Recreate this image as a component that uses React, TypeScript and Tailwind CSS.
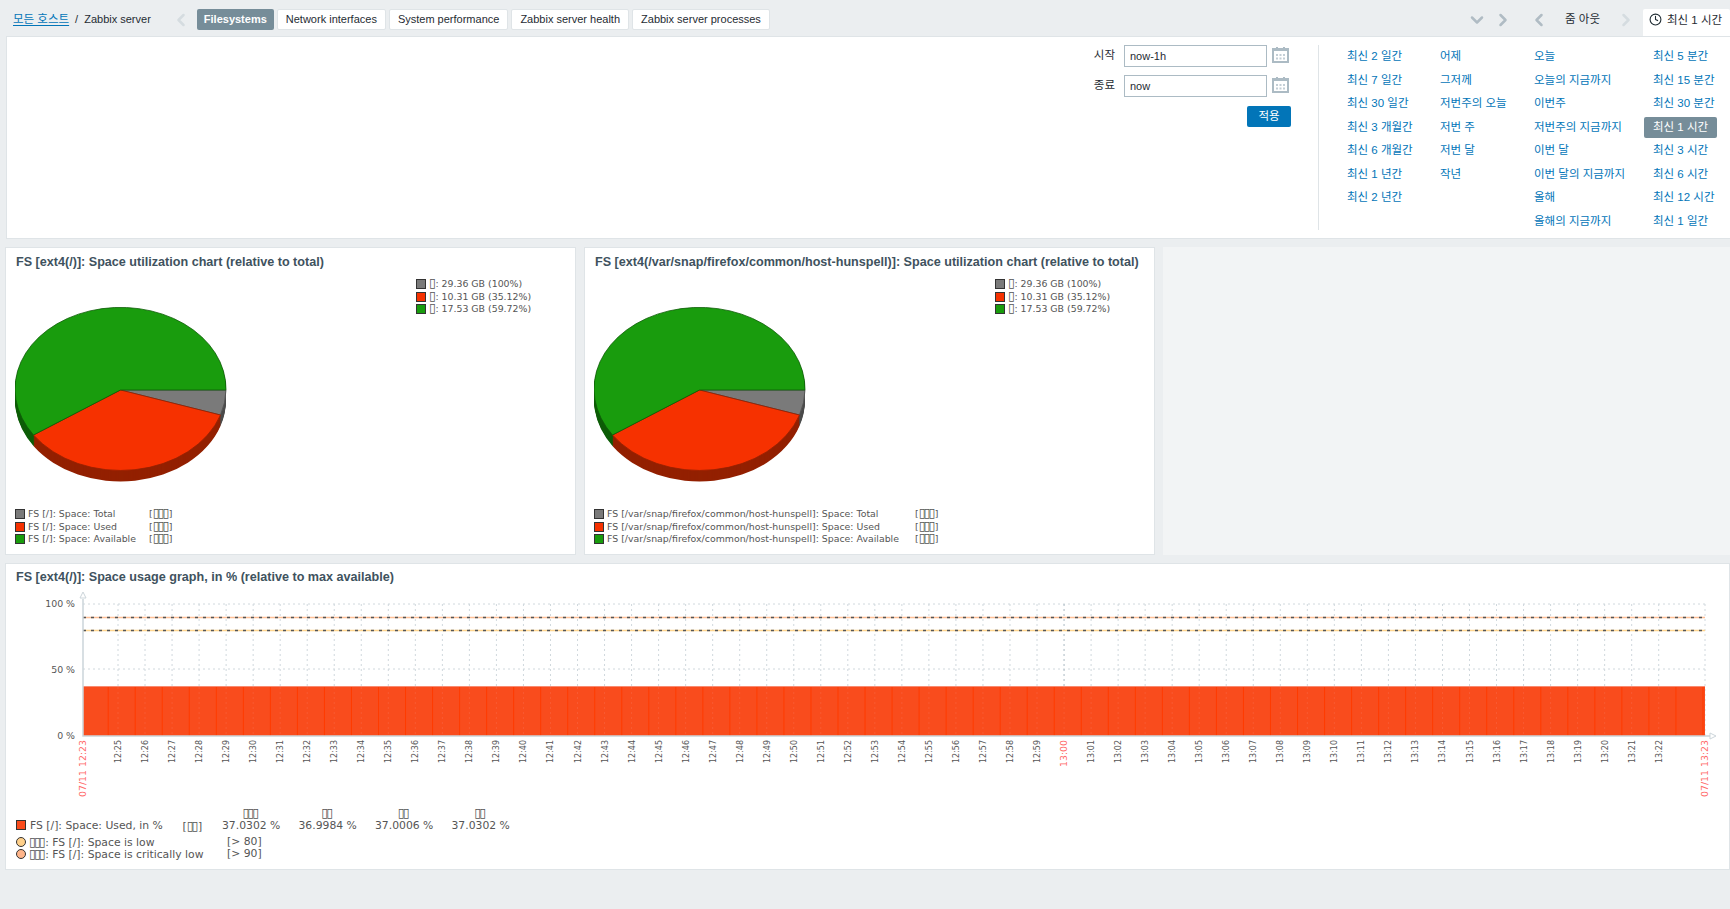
import React from 'react';
import { ChevronDown, ChevronLeft, ChevronRight, Clock } from 'lucide-react';

const TABS = ['Filesystems', 'Network interfaces', 'System performance', 'Zabbix server health', 'Zabbix server processes'];

const TIME_COLUMNS = [
  { width: 'w-[93px]', items: ['최신 2 일간', '최신 7 일간', '최신 30 일간', '최신 3 개월간', '최신 6 개월간', '최신 1 년간', '최신 2 년간'] },
  { width: 'w-[94px]', items: ['어제', '그저께', '저번주의 오늘', '저번 주', '저번 달', '작년'] },
  { width: 'w-[110px]', items: ['오늘', '오늘의 지금까지', '이번주', '저번주의 지금까지', '이번 달', '이번 달의 지금까지', '올해', '올해의 지금까지'] },
  { width: 'w-[90px]', items: ['최신 5 분간', '최신 15 분간', '최신 30 분간', '최신 1 시간', '최신 3 시간', '최신 6 시간', '최신 12 시간', '최신 1 일간'] },
];

const Calendar = () => (
  <svg width="17" height="17" viewBox="0 0 17 17" className="ml-[5px] -mt-[4px]">
    <path d="M1 3h15v13H1z" fill="#fff" stroke="#acbbc4" strokeWidth="2" />
    <path d="M1 3h15v2H1zM4 1h2v2H4zM11 1h2v2h-2z" fill="#acbbc4" />
    <path d="M4 8h2v2H4zM7.5 8h2v2h-2zM11 8h2v2h-2zM4 11.500h2v2H4zM7.500 11.500h2v2h-2zM11 11.500h2v2h-2z" fill="#c3ced5" />
  </svg>
);

// the reference shows missing-glyph boxes here, the chart font has no hangul
const Tofu = ({ text }: { text: string }) => (
  <span className="text-[12.500px] leading-none tracking-[-2px] pr-[1.500px]">{text}</span>
);

// Zabbix draws the pie as a flattened disc with a darker edge underneath
const Pie = () => {
  const gray = 'L105.5,0 A105.5,81.500 0 0 1 100,25';
  const red = 'L100,25 A105.5,81.500 0 0 1 -87,45';
  const green = 'L-87,45 A105.5,81.500 0 1 1 105.5,0';
  const depth = [11, 10, 9, 8, 7, 6, 5, 4, 3, 2, 1];
  return (
    <svg width="213" height="176" viewBox="0 0 213 176" className="shrink-0 mt-[31px]">
      <g transform="translate(105.5,83)">
        {depth.map(d => (
          <g key={d} transform={`translate(0,${d})`}>
            <path d={`M0,0 ${gray}Z`} fill="#4c4c4c" />
            <path d={`M0,0 ${red}Z`} fill="#932000" />
            <path d={`M0,0 ${green}Z`} fill="#0e5d08" />
          </g>
        ))}
        <path d={`M0,0 ${gray}Z`} fill="#7a7a7a" stroke="#4c4c4c" strokeWidth="0.8" />
        <path d={`M0,0 ${red}Z`} fill="#f63100" stroke="#932000" strokeWidth="0.8" />
        <path d={`M0,0 ${green}Z`} fill="#199c0d" stroke="#0e5d08" strokeWidth="0.8" />
      </g>
    </svg>
  );
};

const Swatch = ({ color }: { color: string }) => (
  <span className="w-[10px] h-[10px] shrink-0 border border-[#333]" style={{ backgroundColor: color }} />
);

interface PieWidgetProps {
  title: string;
  fsName: string;
  bracketX: string;
}

const PieWidget = ({ title, fsName, bracketX }: PieWidgetProps) => {
  const top = [
    { color: '#7a7a7a', text: '29.36 GB (100%)' },
    { color: '#f63100', text: '10.31 GB (35.12%)' },
    { color: '#199c0d', text: '17.53 GB (59.72%)' },
  ];
  const bottom = [
    { color: '#7a7a7a', text: 'Total' },
    { color: '#f63100', text: 'Used' },
    { color: '#199c0d', text: 'Available' },
  ];
  return (
    <div className="w-[571px] h-[308px] bg-white border border-[#dfe4e7] pl-[9px]">
      <h4 className="h-[28px] leading-[28px] pl-[1px] text-[12.600px] font-bold text-[#40525e] whitespace-nowrap">{title}</h4>
      <div className="flex items-start h-[207px]">
        <Pie />
        <div className="ml-[188px] mt-[2px] font-['DejaVu_Sans',sans-serif] text-[9.400px] text-[#555]">
          {top.map(row => (
            <div key={row.text} className="flex items-center h-[12.500px] gap-[3px]">
              <Swatch color={row.color} />
              <span className="whitespace-nowrap"><Tofu text="▯" />: {row.text}</span>
            </div>
          ))}
        </div>
      </div>
      <div className="mt-[25px] font-['DejaVu_Sans',sans-serif] text-[9.400px] text-[#555]">
        {bottom.map(row => (
          <div key={row.text} className="flex items-center h-[12.500px] gap-[3px]">
            <Swatch color={row.color} />
            <span className={`${bracketX} whitespace-nowrap`}>FS [{fsName}]: Space: {row.text}</span>
            <span className="whitespace-nowrap">[<Tofu text="▯▯▯" />]</span>
          </div>
        ))}
      </div>
    </div>
  );
};

const MINUTE_PX = 27.03;

const tickLabel = (i: number) => {
  const total = 12 * 60 + 25 + i;
  return `${Math.floor(total / 60)}:${String(total % 60).padStart(2, '0')}`;
};

const UsageChart = () => {
  const ticks = Array.from({ length: 58 }, (_, i) => i);
  const bars = Array.from({ length: 60 }, (_, i) => i);
  const font = { fontFamily: 'DejaVu Sans, sans-serif' };
  return (
    <svg width="1724" height="216" viewBox="0 0 1724 216" className="block" style={font}>
      {/* grid */}
      <g stroke="#d0d8dd" strokeWidth="1" strokeDasharray="2 3">
        <path d="M77 13H1699M77 78H1699M1699 13V145" fill="none" />
        {ticks.map(i => (
          <path key={i} d={`M${112 + i * MINUTE_PX} 13V145`} stroke={i === 35 ? '#a9b8c1' : '#d0d8dd'} />
        ))}
      </g>
      {/* thresholds */}
      <path d="M77 26.500H1699" stroke="#ffc097" strokeWidth="1.500" />
      <path d="M77 26.500H1699" stroke="#555" strokeWidth="1.500" strokeDasharray="3 5" />
      <path d="M77 39.500H1699" stroke="#ffd58f" strokeWidth="1.500" />
      <path d="M77 39.500H1699" stroke="#555" strokeWidth="1.500" strokeDasharray="3 5" />
      {/* data */}
      <rect x="77" y="95" width="1622" height="50" fill="#f94c1d" />
      <path d="M77 95.500H1699" stroke="#f98a70" />
      {bars.map(i => (
        <path key={i} d={`M${102.2 + i * MINUTE_PX} 96V145`} stroke="#ff3b00" />
      ))}
      {ticks.map(i => (
        <path key={i} d={`M${112 + i * MINUTE_PX} 96V145`} stroke="#f95a32" strokeDasharray="2 3" />
      ))}
      {/* axes */}
      <path d="M77 8V145H1704" fill="none" stroke="#ccd5da" strokeWidth="1.500" />
      <path d="M77 1L74 7H80Z" fill="#fff" stroke="#ccd5da" />
      <path d="M1710 145L1704 142V148Z" fill="#fff" stroke="#ccd5da" />
      {/* y labels */}
      <g fontSize="9.400" fill="#555" textAnchor="end">
        <text x="69" y="16">100 %</text>
        <text x="69" y="82">50 %</text>
        <text x="69" y="148">0 %</text>
      </g>
      {/* x labels */}
      {ticks.map(i => {
        const x = 112 + i * MINUTE_PX + 3;
        const major = i === 35;
        return (
          <text
            key={i}
            x={x}
            y={149}
            fontSize={major ? 9.4 : 8}
            fill={major ? '#ff6a6a' : '#555'}
            textAnchor="end"
            transform={`rotate(-90 ${x} 149)`}
          >
            {tickLabel(i)}
          </text>
        );
      })}
      <text x="80" y="149" fontSize="9.400" fill="#ff6a6a" textAnchor="end" transform="rotate(-90 80 149)">07/11 12:23</text>
      <text x="1702" y="149" fontSize="9.400" fill="#ff6a6a" textAnchor="end" transform="rotate(-90 1702 149)">07/11 13:23</text>
    </svg>
  );
};

const App = () => {
  const values = [
    { head: '▯▯▯', value: '37.0302 %' },
    { head: '▯▯', value: '36.9984 %' },
    { head: '▯▯', value: '37.0006 %' },
    { head: '▯▯', value: '37.0302 %' },
  ];

  return (
    <div className="w-[1730px] h-[909px] overflow-hidden bg-[#ebeef0] text-[#1f2c33] text-[11px] font-['Liberation_Sans','Noto_Sans_CJK_KR',sans-serif]">
      {/* header */}
      <div className="flex h-[36px] pl-[13px] pt-[9px]">
        <div className="flex items-center h-[21px]">
          <a className="text-[#0275b8] text-[11.500px] underline underline-offset-2">모든 호스트</a>
          <span className="mx-[6px]">/</span>
          <span>Zabbix server</span>
          <ChevronLeft className="ml-[20px] mr-[6px] w-[20px] h-[20px] text-[#d5dce0]" strokeWidth={3} />
          <div className="flex gap-[3px]">
            {TABS.map((tab, i) => (
              <div
                key={tab}
                className={
                  i === 0
                    ? 'h-[21px] leading-[21px] px-[7px] bg-[#768d99] text-white font-bold rounded-[2px]'
                    : 'h-[21px] leading-[19px] px-[8px] bg-white border border-[#dfe4e7] rounded-[2px]'
                }
              >
                {tab}
              </div>
            ))}
          </div>
        </div>
        <div className="ml-auto flex items-center h-[27px] text-[11.500px]">
          <div className="flex items-center h-[21px] self-start">
            <ChevronDown className="w-[20px] h-[20px] text-[#b0bcc4]" strokeWidth={3} />
            <ChevronRight className="ml-[6px] w-[20px] h-[20px] text-[#b0bcc4]" strokeWidth={3} />
            <ChevronLeft className="ml-[16px] w-[20px] h-[20px] text-[#b0bcc4]" strokeWidth={3} />
            <span className="ml-[16px]">줌 아웃</span>
            <ChevronRight className="ml-[16px] w-[20px] h-[20px] text-[#d5dce0]" strokeWidth={3} />
          </div>
          <div className="ml-[7px] w-[87px] h-[27px] bg-white rounded-t-[2px] flex items-start pt-[3px] pl-[6px]">
            <Clock className="mt-[1px] w-[13px] h-[13px] shrink-0 text-[#1f2c33]" strokeWidth={2} />
            <span className="ml-[5px] whitespace-nowrap">최신 1 시간</span>
          </div>
        </div>
      </div>

      {/* time filter */}
      <div className="flex ml-[6px] h-[203px] bg-white border border-[#dfe4e7] border-r-0">
        <div className="flex-1 flex flex-col items-end pt-[8px] pr-[27px]">
          <div className="flex items-center h-[22px] mr-[2px]">
            <label className="text-[11.500px]">시작</label>
            <input readOnly value="now-1h" className="ml-[9px] w-[143px] h-[22px] px-[5px] border border-[#acbbc4] outline-none" />
            <Calendar />
          </div>
          <div className="flex items-center h-[22px] mt-[8px] mr-[2px]">
            <label className="text-[11.500px]">종료</label>
            <input readOnly value="now" className="ml-[9px] w-[143px] h-[22px] px-[5px] border border-[#acbbc4] outline-none" />
            <Calendar />
          </div>
          <button className="mt-[9px] w-[44px] h-[21px] bg-[#0275b8] text-white text-[11.500px] rounded-[2px]">적용</button>
        </div>
        <div className="flex mt-[8px] mb-[8px] border-l border-[#dfe4e7] pl-[28px] w-[412px]">
          {TIME_COLUMNS.map((col, c) => (
            <div key={c} className={`${col.width} flex flex-col shrink-0 ${c === 2 ? 'mr-[9px]' : ''}`}>
              {col.items.map(item => (
                <div key={item} className="h-[23.500px] shrink-0 flex items-center">
                  {item === '최신 1 시간' ? (
                    <span className="h-[21px] leading-[21px] -ml-[9px] px-[9px] w-[73px] bg-[#768d99] text-white text-[11.500px] rounded-[2px] whitespace-nowrap">{item}</span>
                  ) : (
                    <a className="text-[#0275b8] text-[11.500px] whitespace-nowrap">{item}</a>
                  )}
                </div>
              ))}
            </div>
          ))}
        </div>
      </div>

      {/* widgets */}
      <div className="flex gap-[8px] ml-[5px] mt-[8px]">
        <PieWidget title="FS [ext4(/)]: Space utilization chart (relative to total)" fsName="/" bracketX="w-[118px]" />
        <PieWidget title="FS [ext4(/var/snap/firefox/common/host-hunspell)]: Space utilization chart (relative to total)" fsName="/var/snap/firefox/common/host-hunspell" bracketX="w-[305px]" />
        <div className="flex-1 h-[308px] bg-[#f2f4f5]" />
      </div>

      {/* usage graph */}
      <div className="ml-[5px] mt-[8px] h-[307px] bg-white border border-[#dfe4e7]">
        <h4 className="h-[27px] leading-[27px] pl-[10px] text-[12.600px] font-bold text-[#40525e]">FS [ext4(/)]: Space usage graph, in % (relative to max available)</h4>
        <UsageChart />
        <div className="pl-[10px] font-['DejaVu_Sans',sans-serif] text-[10.800px] text-[#555] leading-[12px]">
          <div className="grid grid-cols-[14px_152.500px_39.500px_76.500px_76.500px_76.500px_76.500px]">
            {values.map((v, i) => (
              <span key={i} className={`w-[57px] text-center ${i === 0 ? 'col-start-4' : ''}`}><Tofu text={v.head} /></span>
            ))}
            <Swatch color="#f94c1d" />
            <span className="whitespace-nowrap">FS [/]: Space: Used, in %</span>
            <span className="whitespace-nowrap">[<Tofu text="▯▯" />]</span>
            {values.map((v, i) => (
              <span key={i} className="w-[57px] text-center whitespace-nowrap">{v.value}</span>
            ))}
          </div>
          <div className="mt-[3px] h-[12px] flex items-center">
            <span className="w-[10px] h-[10px] rounded-full border border-[#333] bg-[#ffd08a] shrink-0" />
            <span className="ml-[3px] w-[198px] whitespace-nowrap"><Tofu text="▯▯▯" />: FS [/]: Space is low</span>
            <span>[&gt; 80]</span>
          </div>
          <div className="h-[12px] flex items-center">
            <span className="w-[10px] h-[10px] rounded-full border border-[#333] bg-[#ffb58a] shrink-0" />
            <span className="ml-[3px] w-[198px] whitespace-nowrap"><Tofu text="▯▯▯" />: FS [/]: Space is critically low</span>
            <span>[&gt; 90]</span>
          </div>
        </div>
      </div>
    </div>
  );
};

export default App;
